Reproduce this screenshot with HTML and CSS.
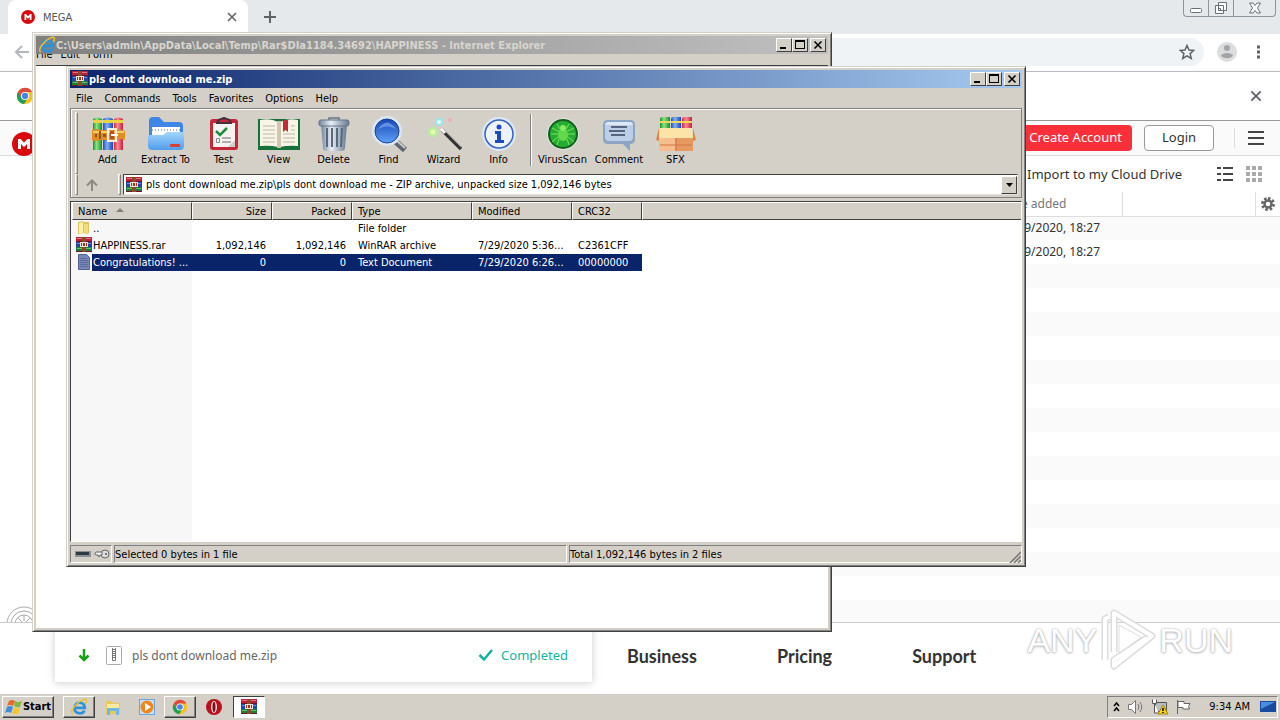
FILE: index.html
```html
<!DOCTYPE html>
<html lang="en">
<head>
    <meta charset="UTF-8">
    <meta name="viewport" content="width=device-width, initial-scale=1.0">
    <title>MEGA</title>
    <link rel="stylesheet" href="styles.css">
</head>
<body>
    <!-- shared icons -->
    <svg class="sprite" width="0" height="0" aria-hidden="true">
        <defs>
            <linearGradient id="gGreen"><stop offset="0" stop-color="#1c8f33"/><stop offset=".4" stop-color="#8fe67c"/><stop offset="1" stop-color="#1a8a30"/></linearGradient>
            <linearGradient id="gBlue"><stop offset="0" stop-color="#1e4fb8"/><stop offset=".4" stop-color="#7fb0f8"/><stop offset="1" stop-color="#1d47a6"/></linearGradient>
            <linearGradient id="gRed"><stop offset="0" stop-color="#d02a3c"/><stop offset=".4" stop-color="#fb8a94"/><stop offset="1" stop-color="#c81f3c"/></linearGradient>
            <linearGradient id="gFolder" x2="0" y2="1"><stop offset="0" stop-color="#a4d6fd"/><stop offset="1" stop-color="#4f9ded"/></linearGradient>
            <linearGradient id="gLens" x2="0" y2="1"><stop offset="0" stop-color="#1746b4"/><stop offset="1" stop-color="#5da2f8"/></linearGradient>
            <linearGradient id="gCan"><stop offset="0" stop-color="#74859a"/><stop offset=".4" stop-color="#e8eef5"/><stop offset="1" stop-color="#66788d"/></linearGradient>
        </defs>
        <symbol id="winrar" viewBox="0 0 16 16">
            <path fill="#b8203a" d="M0 0h16v5H0z"/>
            <path fill="#2446a8" d="M0 5h16v5H0z"/>
            <path fill="#1d7d3a" d="M0 10h16v5H0z"/>
            <path fill="#6d1530" d="M0 4h16v1H0zM0 14h16v1H0z"/>
            <path fill="#e2738a" d="M1 1h14v1H1z"/>
            <path fill="#6c8ce0" d="M1 6h14v1H1z"/>
            <path fill="#68bd72" d="M1 11h14v1H1z"/>
            <path fill="#8a4a25" d="M6 0h4v15H6z"/>
            <path fill="#efe4d0" d="M4 5h8v5H4z"/>
            <path fill="#a03418" d="M5 6h1v3H5zM7 6h2v3H7zM10 6h1v3h-1z"/>
        </symbol>
        <symbol id="chrome" viewBox="0 0 20 20">
            <circle cx="10" cy="10" r="9" fill="#fbc116"/>
            <path fill="#dd4b3e" d="M10 10V5.500h8A9 9 0 0 0 2.200 5.500L6 12z"/>
            <path fill="#1e9e58" d="M2.200 5.500A9 9 0 0 0 9 19l4-6.500-3-2.500-4 2z"/>
            <circle cx="10" cy="10" r="4.500" fill="#fff"/>
            <circle cx="10" cy="10" r="3.500" fill="#4484f2"/>
        </symbol>
        <symbol id="ie" viewBox="0 0 20 20">
            <path fill="none" stroke="#2a93dc" stroke-width="3" d="M5 11h11.500c0-8-11.500-7.500-11.500 0 0 7 9 7.500 11 3"/>
            <path fill="none" stroke="#eebf2c" stroke-width="1.600" d="M3 18c-4-3 4-13 11-16 5-2 5 1 3 5"/>
        </symbol>
        <symbol id="mega" viewBox="0 0 24 24">
            <circle cx="12" cy="12" r="12" fill="#d9090e"/>
            <path fill="#fff" d="M6 17V7h2.500L12 10.500 15.500 7H18v10h-3v-5l-3 3-3-3v5z"/>
        </symbol>
        <symbol id="cross" viewBox="0 0 12 12">
            <path fill="none" stroke="currentColor" stroke-width="1.600" d="M2 2l8 8M10 2l-8 8"/>
        </symbol>
    </svg>

    <div class="desktop">
        <!-- browser -->
        <div class="chrome">
            <div class="tab-strip">
                <div class="tab">
                    <svg width="14" height="14"><use href="#mega"/></svg>
                    <span class="tab-title">MEGA</span>
                    <button class="plain" aria-label="Close tab"><svg width="12" height="12"><use href="#cross"/></svg></button>
                </div>
                <button class="plain new-tab" aria-label="New tab">
                    <svg width="14" height="14" viewBox="0 0 14 14"><path stroke="#5f6368" stroke-width="2" d="M7 1v12M1 7h12"/></svg>
                </button>
                <div class="aero-controls">
                    <button aria-label="Minimize"><svg width="14" height="12" viewBox="0 0 14 12"><rect x="1.500" y="6.500" width="11" height="4" rx="1" fill="#fff" stroke="#6b7078"/></svg></button>
                    <button aria-label="Restore"><svg width="14" height="14" viewBox="0 0 14 14"><path fill="#fff" stroke="#6b7078" d="M4.500 1.500h8v8h-8zM1.500 4.500h8v8h-8z"/><path fill="none" stroke="#6b7078" d="M4.500 7.500h2v2h-2z"/></svg></button>
                    <button class="aero-close" aria-label="Close"><svg width="12" height="12" viewBox="0 0 12 12"><path fill="#fff" stroke="#6b7078" d="M.5 1h3.500L6 3.500 8 1h3.500L8.500 6l3 5H8L6 8.500 4 11H.5l3-5z"/></svg></button>
                </div>
            </div>
            <div class="nav-bar">
                <button class="plain" aria-label="Back"><svg width="16" height="16" viewBox="0 0 16 16"><path fill="none" stroke="#b4b6b9" stroke-width="2" d="M15 8H2M8 2L2 8l6 6"/></svg></button>
                <div class="omnibox">
                    <button class="plain" aria-label="Bookmark this page"><svg width="16" height="16" viewBox="0 0 16 16"><path fill="none" stroke="#5f6368" stroke-width="1.500" d="M8 1.500l2 4.500 4.800.4-3.700 3.200 1.200 4.900L8 11.900l-4.300 2.600 1.200-4.900L1.200 6.400 6 6z"/></svg></button>
                </div>
                <button class="plain" aria-label="Profile"><svg width="20" height="20" viewBox="0 0 20 20"><circle cx="10" cy="10" r="10" fill="#dcdddf"/><circle cx="10" cy="6" r="3" fill="#a2a4a7"/><path fill="#a2a4a7" d="M4 13.500c1-3.500 11-3.500 12 0-2 3.500-10 3.500-12 0z"/></svg></button>
                <button class="plain" aria-label="Menu"><svg width="16" height="16" viewBox="0 0 16 16"><path fill="#5f6368" d="M7 1.500h3v3H7zM7 6.500h3v3H7zM7 11.500h3v3H7z"/></svg></button>
            </div>
            <div class="infobar">
                <svg width="18" height="18"><use href="#chrome"/></svg>
                <button class="plain" aria-label="Dismiss"><svg width="14" height="14"><use href="#cross"/></svg></button>
            </div>
            <div class="mega-header">
                <svg class="mega-logo" width="24" height="24"><use href="#mega"/></svg>
                <button class="btn-create">Create Account</button>
                <button class="btn-login">Login</button>
                <span class="divider"></span>
                <button class="plain" aria-label="Main menu"><svg width="18" height="16" viewBox="0 0 18 16"><path stroke="#444" stroke-width="2" d="M1 2h16M1 8h16M1 14h16"/></svg></button>
            </div>
            <div class="mega-tools">
                <a href="#">Import to my Cloud Drive</a>
                <button class="plain" aria-label="List view"><svg width="18" height="16" viewBox="0 0 18 16"><path stroke="#444" stroke-width="2" d="M1 2h4M7 2h10M1 8h4M7 8h10M1 14h4M7 14h10"/></svg></button>
                <button class="plain" aria-label="Grid view"><svg width="16" height="16" viewBox="0 0 16 16"><path fill="#aaa" d="M0 0h4v4H0zM6 0h4v4H6zM12 0h4v4h-4zM0 6h4v4H0zM6 6h4v4H6zM12 6h4v4h-4zM0 12h4v4H0zM6 12h4v4H6zM12 12h4v4h-4z"/></svg></button>
            </div>
            <div class="mega-files">
                <table class="mega-table">
                    <thead>
                        <tr><th></th><th class="date">Date added</th><th class="rest"></th><th class="gear"><svg width="14" height="14" viewBox="0 0 14 14"><path fill="none" stroke="#666" stroke-width="3" stroke-dasharray="2.500 1.820" d="M7 1.500a5.500 5.500 0 1 1-.01 0"/><circle cx="7" cy="7" r="3.500" fill="none" stroke="#666" stroke-width="2.500"/></svg></th></tr>
                    </thead>
                    <tbody>
                        <tr><td></td><td class="date">07/29/2020, 18:27</td><td colspan="2"></td></tr>
                        <tr><td></td><td class="date">07/29/2020, 18:27</td><td colspan="2"></td></tr>
                    </tbody>
                </table>
                <svg class="dial" width="36" height="16" viewBox="0 0 36 16"><g fill="none" stroke="#aaa"><circle cx="18" cy="18" r="17"/><circle cx="18" cy="18" r="13"/><circle cx="18" cy="18" r="9"/><path d="M12 12l4 4M18 9v6M24 12l-4 4"/></g></svg>
            </div>
            <div class="mega-footer">
                <div class="transfer">
                    <svg width="12" height="14" viewBox="0 0 12 14"><path fill="none" stroke="#12a312" stroke-width="2.500" d="M6 1v11M1.500 7.500L6 12l4.500-4.500"/></svg>
                    <svg class="zip" width="16" height="19" viewBox="0 0 16 19"><rect x=".5" y=".5" width="15" height="18" rx="1" fill="#fff" stroke="#aaa"/><path fill="none" stroke="#777" d="M6.500 2v12.500h3V2M7 3.500h2M7 5.500h2M7 7.500h2M7 9.500h2M7 11.500h2"/></svg>
                    <span class="transfer-name">pls dont download me.zip</span>
                    <svg width="16" height="14" viewBox="0 0 16 14"><path fill="none" stroke="#10b5a0" stroke-width="2.500" d="M1.500 7l4.500 4.500L14 2"/></svg>
                    <span class="transfer-state">Completed</span>
                </div>
                <nav class="footer-links">
                    <a href="#">Business</a>
                    <a href="#">Pricing</a>
                    <a href="#">Support</a>
                </nav>
            </div>
        </div>

        <!-- Internet Explorer window -->
        <div class="window ie-window">
            <div class="title-bar inactive">
                <svg width="18" height="18"><use href="#ie"/></svg>
                <span class="caption">C:\Users\admin\AppData\Local\Temp\Rar$DIa1184.34692\HAPPINESS - Internet Explorer</span>
                <div class="controls">
                    <button aria-label="Minimize"><svg width="10" height="10"><path fill="#000" d="M1 7h6v2H1z"/></svg></button>
                    <button aria-label="Maximize"><svg width="10" height="10"><path fill="#000" fill-rule="evenodd" d="M0 0h10v9H0zM1 2v6h8V2z"/></svg></button>
                    <button class="close" aria-label="Close"><svg width="10" height="10"><path fill="none" stroke="#000" stroke-width="1.600" d="M1.500 1.500l7 7M8.500 1.500l-7 7"/></svg></button>
                </div>
            </div>
            <div class="ie-menu"><span>File</span><span>Edit</span><span>Form</span></div>
            <div class="ie-page"></div>
        </div>

        <!-- WinRAR window -->
        <div class="window rar-window">
            <div class="title-bar">
                <svg width="16" height="16"><use href="#winrar"/></svg>
                <span class="caption">pls dont download me.zip</span>
                <div class="controls">
                    <button aria-label="Minimize"><svg width="10" height="10"><path fill="#000" d="M1 7h6v2H1z"/></svg></button>
                    <button aria-label="Maximize"><svg width="10" height="10"><path fill="#000" fill-rule="evenodd" d="M0 0h10v9H0zM1 2v6h8V2z"/></svg></button>
                    <button class="close" aria-label="Close"><svg width="10" height="10"><path fill="none" stroke="#000" stroke-width="1.600" d="M1.500 1.500l7 7M8.500 1.500l-7 7"/></svg></button>
                </div>
            </div>
            <div class="menu-bar">
                <button>File</button><button>Commands</button><button>Tools</button><button>Favorites</button><button>Options</button><button>Help</button>
            </div>
            <div class="rebar">
                <div class="toolbar">
                    <span class="grip"></span>
                    <button class="tool">
                        <svg width="36" height="36" viewBox="0 0 36 36">
                            <path fill="url(#gGreen)" d="M3 3q4-3 9 0v31H3z"/><path fill="url(#gBlue)" d="M13 3q5-3 10 0v31H13z"/><path fill="url(#gRed)" d="M24 3q5-3 9 0v31h-9z"/>
                            <path fill="#e8d442" d="M3 4h9v3H3zM13 4h10v3H13zM24 4h9v3h-9z"/>
                            <path fill="#dd8e24" d="M2 14q4-2 8 0h16q4-2 9 1v9q-5-2-9 0H10q-4 2-8 0z"/><path fill="#f8cd63" d="M3 15h31v2H3z"/>
                            <path fill="#9c5212" d="M5 18h2v3H5zM9 15h2v8H9zM13 18h3v3h-3z"/>
                            <path fill="none" stroke="#f7f1e4" stroke-width="2" d="M18 13h8v12h-8z"/><path fill="#b84f20" d="M20 15h4v8h-4z"/><path fill="#fff" d="M21 18h7v2h-7z"/>
                        </svg>
                        Add
                    </button>
                    <button class="tool wide">
                        <svg width="36" height="36" viewBox="0 0 36 36">
                            <path fill="#3f86e6" d="M1 5q0-4 4-4h6l5 5h15q4 0 4 4v12H1z"/><path fill="#fff" d="M4 11h28v10H4z"/>
                            <path fill="none" stroke="#a7b4c4" stroke-width="2" stroke-dasharray="1 2" d="M4 14h28"/>
                            <path fill="url(#gFolder)" d="M0 19h15l4-3h17v14q0 4-4 4H4q-4 0-4-4z"/>
                            <rect x="22" y="28" width="10" height="3" rx="1" fill="#d64232"/>
                        </svg>
                        Extract To
                    </button>
                    <button class="tool">
                        <svg width="36" height="36" viewBox="0 0 36 36">
                            <rect x="4" y="3" width="28" height="31" rx="3" fill="#c4263a"/><path fill="#f4f3f0" d="M7 7h22v24H7z"/>
                            <path fill="#cfcfcd" d="M22 31l7-7v7z"/><path fill="none" stroke="#443038" stroke-width="2" d="M11 7q1-4 5-4 2-2 4 0 4 0 5 4z"/>
                            <path fill="none" stroke="#218b40" stroke-width="2.500" d="M10 15l4 4 7-7"/><path stroke="#999" stroke-width="1.500" d="M16 22h9M16 26h9"/><path fill="none" stroke="#888" d="M10.500 22.500h3v4h-3z"/>
                        </svg>
                        Test
                    </button>
                    <button class="tool">
                        <svg width="42" height="36" viewBox="0 0 42 36">
                            <path fill="#18703a" d="M0 3h42v31H0z"/><path fill="#f8f5e7" d="M2 4q11-2 18 2v25q-8-2-18-1zM40 4q-11-2-18 2v25q8-2 18-1z"/>
                            <path fill="#cfc8ae" d="M19 5h4v27h-4z"/><path stroke="#bab7a9" d="M5 10h12M5 14h12M5 18h12M5 22h12M5 26h12M25 18h12M25 22h12M25 26h12M33 10h4M33 14h4"/>
                            <path fill="#c22b34" d="M25 4h5v12l-2.500-2-2.500 2z"/>
                        </svg>
                        View
                    </button>
                    <button class="tool">
                        <svg width="36" height="36" viewBox="0 0 36 36">
                            <path fill="url(#gCan)" d="M5 8h26l-2 24q0 3-4 3H11q-4 0-4-3z"/><path stroke="#59697c" stroke-width="2" d="M11 12v19M16 12v19M21 12v19M26 12l-1 19"/>
                            <rect x="3" y="4" width="30" height="6" rx="2" fill="url(#gCan)" stroke="#65758a"/><path fill="none" stroke="#65758a" stroke-width="1.500" d="M13 4V2h10v2"/>
                        </svg>
                        Delete
                    </button>
                    <button class="tool">
                        <svg width="36" height="36" viewBox="0 0 36 36">
                            <path stroke="#60666f" stroke-width="6" d="M24 25l10 9"/><path stroke="#c8cdd4" stroke-width="2" d="M25 24l9 8"/>
                            <circle cx="16" cy="15" r="15" fill="#dce6f0"/><circle cx="16" cy="15" r="12" fill="url(#gLens)" stroke="#173f96"/>
                            <path fill="#85b4f7" opacity=".6" d="M7 13q9-13 18 0-9-5-18 0z"/>
                        </svg>
                        Find
                    </button>
                    <button class="tool">
                        <svg width="36" height="36" viewBox="0 0 36 36">
                            <path stroke="#333" stroke-width="3.500" d="M16 14l19 19"/><path stroke="#999" d="M17 13l18 18"/><path stroke="#f5f5f5" stroke-width="3" d="M15 13l4 4"/>
                            <circle cx="7" cy="16" r="5" fill="#b8ee9a"/><circle cx="7" cy="16" r="2.500" fill="#e5fcb0"/>
                            <circle cx="13" cy="6" r="4" fill="#9de5ec"/><circle cx="13" cy="6" r="2" fill="#e3ffff"/><circle cx="24" cy="4" r="2" fill="#efb1b9"/>
                        </svg>
                        Wizard
                    </button>
                    <button class="tool">
                        <svg width="36" height="36" viewBox="0 0 36 36">
                            <circle cx="18" cy="18" r="17" fill="#dce7f7"/><circle cx="18" cy="18" r="14" fill="#edf2fb" stroke="#3661c2" stroke-width="1.500"/>
                            <circle cx="18" cy="11" r="2.500" fill="#1c4bc2"/><path fill="#1c4bc2" d="M14 15h6v9h3v3h-9v-3h2v-6h-2z"/>
                        </svg>
                        Info
                    </button>
                    <span class="tool-sep"></span>
                    <button class="tool">
                        <svg width="36" height="36" viewBox="0 0 36 36">
                            <circle cx="18" cy="18" r="16" fill="#dfe8dc"/><circle cx="18" cy="18" r="15" fill="#155d20"/><circle cx="18" cy="18" r="13" fill="#24ad32"/>
                            <path fill="none" stroke="#7de45c" d="M7 12l6 3h10l6-3M6 18h24M7 26l6-5h10l6 5M12 8l3 5M24 8l-3 5M12 29l2-6M24 29l-2-6"/>
                            <ellipse cx="18" cy="19" rx="5" ry="6" fill="#63d94a"/><circle cx="18" cy="12" r="3" fill="#88ec63"/>
                        </svg>
                        VirusScan
                    </button>
                    <button class="tool comment">
                        <svg width="36" height="36" viewBox="0 0 36 36">
                            <path fill="#8da5c5" d="M7 4h22q5 0 5 5v14q0 5-5 5v7l-7-7H7q-5 0-5-5V9q0-5 5-5z"/><path fill="#bdcfe6" d="M8 6h20q4 0 4 4v11q0 4-4 4H8q-4 0-4-4V10q0-4 4-4z"/>
                            <path fill="#dce8f5" d="M8 6h20q4 0 4 3H4q0-3 4-3z"/><path stroke="#34415c" stroke-width="1.500" d="M10 11h16M8 15h16M10 19h14"/>
                        </svg>
                        Comment
                    </button>
                    <button class="tool">
                        <svg width="40" height="36" viewBox="0 0 40 36">
                            <path fill="url(#gGreen)" d="M4 3q0-2 3-2h7v14H4z"/><path fill="url(#gBlue)" d="M15 3q0-2 3-2h7v14H15z"/><path fill="url(#gRed)" d="M26 3q0-2 3-2h7v14H26z"/>
                            <path fill="#f0dc54" d="M4 5h10v2H4zM15 5h10v2H15zM26 5h10v2H26z"/>
                            <path fill="#e79961" d="M3 20h34v15H3z"/><path fill="#f7bd8c" d="M3 21h16v14H3z"/>
                            <path fill="#fce4a8" d="M4 12h32l1 10H3z"/>
                            <path fill="#d9854d" d="M3 12L0 24l3 1zM37 12l3 12-3 1z"/><path stroke="#cd7945" d="M20 22v13M4 29h32"/>
                        </svg>
                        SFX
                    </button>
                </div>
                <div class="address-row">
                    <span class="grip"></span>
                    <button class="plain up" aria-label="Up one level"><svg width="12" height="12" viewBox="0 0 12 12"><path fill="none" stroke="#8b8985" stroke-width="2" d="M6 12V2M1 6.500L6 1.500l5 5"/></svg></button>
                    <span class="grip"></span>
                    <div class="combo">
                        <svg width="16" height="16"><use href="#winrar"/></svg>
                        <input type="text" aria-label="Archive path" value="pls dont download me.zip\pls dont download me - ZIP archive, unpacked size 1,092,146 bytes">
                        <button class="drop" aria-label="Show list"><svg width="7" height="4"><path fill="#000" d="M0 0h7L3.500 4z"/></svg></button>
                    </div>
                </div>
            </div>
            <div class="file-list">
                <table class="files">
                    <thead>
                        <tr>
                            <th class="c-name">Name <svg width="8" height="4"><path fill="#85827c" d="M4 0l4 4H0z"/></svg></th>
                            <th class="c-size num">Size</th>
                            <th class="c-size num">Packed</th>
                            <th class="c-type">Type</th>
                            <th class="c-mod">Modified</th>
                            <th class="c-crc">CRC32</th>
                            <th class="c-rest"></th>
                        </tr>
                    </thead>
                    <tbody>
                        <tr>
                            <td class="name"><div><svg width="16" height="16" viewBox="0 0 16 16"><path fill="#e2c35b" d="M2 2l5-1v1h6v11H7l-5 1z"/><path fill="#fbeeaa" d="M3 3l4-1v12l-4-1z"/><path fill="#f1dc82" d="M8 4h4v10H8z"/></svg><span>..</span></div></td>
                            <td></td><td></td><td>File folder</td><td></td><td></td><td></td>
                        </tr>
                        <tr>
                            <td class="name"><div><svg width="16" height="16"><use href="#winrar"/></svg><span>HAPPINESS.rar</span></div></td>
                            <td class="num">1,092,146</td><td class="num">1,092,146</td><td>WinRAR archive</td><td>7/29/2020 5:36...</td><td>C2361CFF</td><td></td>
                        </tr>
                        <tr class="selected">
                            <td class="name"><div><svg width="16" height="16" viewBox="0 0 16 16"><path fill="#7788b8" stroke="#526397" d="M2.500.5h8l3 3v12h-11z"/><path stroke="#5a6b9e" d="M4 4.500h7M4 6.500h8M4 8.500h8M4 10.500h8M4 12.500h8"/></svg><span>Congratulations! ...</span></div></td>
                            <td class="num">0</td><td class="num">0</td><td>Text Document</td><td>7/29/2020 6:26...</td><td>00000000</td><td></td>
                        </tr>
                    </tbody>
                </table>
            </div>
            <div class="status-bar">
                <div class="pane pane-icons">
                    <svg width="16" height="8" viewBox="0 0 16 8"><path fill="#8b9096" d="M0 1h16v6H0z"/><path fill="#2f3b44" d="M1 2h13v3H1z"/></svg>
                    <svg width="16" height="11" viewBox="0 0 16 11"><circle cx="11" cy="5" r="4" fill="#ddd" stroke="#666"/><path fill="#eee" stroke="#666" d="M8 3H2L.5 5 2 6h2l1 2 1-2h2z"/><circle cx="12" cy="5" r="1" fill="#555"/></svg>
                </div>
                <div class="pane">Selected 0 bytes in 1 file</div>
                <div class="pane">Total 1,092,146 bytes in 2 files
                    <svg class="size-grip" width="12" height="12" viewBox="0 0 12 12"><path stroke="#77746e" stroke-width="1.500" d="M1 12L12 1M5 12l7-7M9 12l3-3"/></svg>
                </div>
            </div>
        </div>

        <div class="watermark" aria-hidden="true">
            <span>ANY</span>
            <svg width="58" height="64" viewBox="0 0 58 64"><g fill="none" stroke-linejoin="round"><path stroke="#dcdcdc" stroke-width="7" d="M6 52V11l4-2M15 44V5l38 23L15 58v-6l33-22"/><path stroke="#fff" stroke-width="4" d="M6 52V11l4-2M15 44V5l38 23L15 58v-6l33-22"/><path stroke="#ddd" d="M20 17v29l22-17z"/></g></svg>
            <span>RUN</span>
        </div>
    </div>

    <div class="taskbar">
        <button class="start"><svg width="18" height="18" viewBox="0 0 18 18"><path fill="#e46a2c" d="M4 3q3-2 6 0L8 8Q5 6 2 8z"/><path fill="#7cb842" d="M10 3q3 2 7 0l-2 6q-3 1-6-1z"/><path fill="#3f8ede" d="M2 9q3-2 6 0l-2 6q-3-2-6 0z"/><path fill="#f6c431" d="M9 9q3 2 6 1l-2 6q-3 1-6-1z"/></svg>Start</button>
        <button class="task raised" aria-label="Internet Explorer"><svg width="18" height="18"><use href="#ie"/></svg></button>
        <button class="task" aria-label="Explorer"><svg width="18" height="18" viewBox="0 0 18 18"><path fill="#e9c95d" d="M2 3h6l1 2h7v11H2z"/><path fill="#fbeaa3" d="M3 6h12v5H3z"/><path fill="#73b6df" d="M3 10h12v7h-3v-4H6v4H3z"/></svg></button>
        <button class="task" aria-label="Media Player"><svg width="18" height="18" viewBox="0 0 18 18"><path fill="#6ba6dd" d="M1 1h16v16H1z"/><path fill="#c7e0f5" d="M2 2h14v14H2z"/><circle cx="9" cy="9" r="6.500" fill="#f0861c"/><path fill="#fff" d="M7 5l6 4-6 4z"/></svg></button>
        <button class="task raised" aria-label="Chrome"><svg width="16" height="16"><use href="#chrome"/></svg></button>
        <button class="task" aria-label="Opera"><svg width="18" height="18" viewBox="0 0 18 18"><circle cx="9" cy="9" r="8" fill="#b7121b"/><ellipse cx="9" cy="9" rx="3" ry="6" fill="#f8dede"/><ellipse cx="9" cy="9" rx="1.500" ry="5" fill="#7e0a11"/></svg></button>
        <button class="task pressed" aria-label="WinRAR"><svg width="16" height="16"><use href="#winrar"/></svg></button>
        <div class="tray">
            <svg width="9" height="12" viewBox="0 0 9 12"><path fill="none" stroke="#000" stroke-width="1.500" d="M2 5l2.500-3L7 5M2 10l2.500-3L7 10"/></svg>
            <svg width="18" height="16" viewBox="0 0 18 16"><path fill="#fff" stroke="#777" d="M1.500 5.500h3l4-4v13l-4-4h-3z"/><path fill="none" stroke="#777" d="M11 5q2 3 0 6M13 3q3.500 5 0 10"/></svg>
            <svg width="18" height="16" viewBox="0 0 18 16"><path fill="#b9bec4" stroke="#555" d="M4.500 3.500h11v9h-11z"/><path fill="#fff" stroke="#555" d="M1.500.5v4h4v-4M3.500 4v10h4"/><path fill="#f7d51d" stroke="#a88800" d="M12 6l5 9H7z"/><path stroke="#000" stroke-width="1.500" d="M12 9v3M12 13v1"/></svg>
            <svg width="18" height="16" viewBox="0 0 18 16"><path fill="#fff" stroke="#666" d="M2.500 1v14M3 2.500h6v2h6l-1.500 3 1 2.500H8v-1.500H3z"/></svg>
            <span class="clock">9:34 AM</span>
            <svg width="16" height="14" viewBox="0 0 16 14"><path fill="#194b9f" d="M0 1h16v11H0z"/><path fill="#4d8de0" d="M1 2h14L1 9z"/><path fill="#cfd7df" d="M4 12h8v1H4z"/></svg>
        </div>
    </div>
</body>
</html>
```
FILE: styles.css
```css
* {
    box-sizing: border-box;
}
body {
    margin: 0;
    height: 100vh;
    display: flex;
    flex-direction: column;
    overflow: hidden;
    font-family: "DejaVu Sans Condensed", Tahoma, sans-serif;
    font-size: 11px;
    color: #000;
}
button, input {
    font: inherit;
    color: inherit;
    padding: 0;
}
svg {
    display: block;
    flex: none;
}
.sprite {
    position: absolute;
}
.plain {
    border: none;
    background: none;
    display: flex;
    align-items: center;
    justify-content: center;
    color: #5f6368;
}
.desktop {
    position: relative;
    flex: 1;
    min-height: 0;
    overflow: hidden;
}

/* browser */
.chrome {
    height: 100%;
    display: flex;
    flex-direction: column;
    background: #fff;
    font-family: "Noto Sans", sans-serif;
    font-size: 13px;
    color: #333;
}
.tab-strip {
    display: flex;
    height: 34px;
    padding: 0 4px 0 8px;
    background: #e5e9ec;
}
.tab {
    display: flex;
    align-items: center;
    gap: 8px;
    width: 240px;
    padding: 0 10px 0 13px;
    background: #fff;
    border-radius: 8px 8px 0 0;
}
.tab-title {
    flex: 1;
    font-family: "DejaVu Sans Condensed", sans-serif;
    font-size: 11px;
    color: #555;
}
.new-tab {
    width: 44px;
}
.aero-controls {
    display: flex;
    height: 17px;
    margin-left: auto;
    border: 1px solid #8d949c;
    border-top: none;
    border-radius: 0 0 4px 4px;
}
.aero-controls button {
    display: flex;
    align-items: center;
    justify-content: center;
    width: 25px;
    border: none;
    border-right: 1px solid #8d949c;
    background: none;
}
.aero-controls .aero-close {
    width: 41px;
    border-right: none;
}
.nav-bar {
    display: flex;
    align-items: center;
    gap: 13px;
    height: 38px;
    padding: 0 14px 2px;
    border-bottom: 1px solid #b9bbbd;
}
.omnibox {
    flex: 1;
    display: flex;
    justify-content: flex-end;
    align-items: center;
    height: 28px;
    padding: 0 9px;
    background: #f0f3f5;
    border-radius: 14px;
}
.infobar {
    display: flex;
    align-items: center;
    justify-content: space-between;
    height: 49px;
    padding: 0 17px 0 16px;
    border-bottom: 1px solid #999;
    box-shadow: 0 1px 3px #bbb;
}
.mega-header {
    display: flex;
    align-items: center;
    gap: 12px;
    height: 35px;
    padding: 0 15px 0 12px;
    background: #fafafa;
    border-bottom: 1px solid #ddd;
}
.mega-logo {
    margin-top: 12px;
}
.btn-create, .btn-login {
    height: 26px;
    border-radius: 4px;
    font-size: 13px;
}
.btn-create {
    margin-left: auto;
    padding: 0 10px 2px;
    border: none;
    background: #f9303a;
    color: #fff;
}
.btn-login {
    width: 70px;
    padding-bottom: 2px;
    border: 1px solid #999;
    background: #fff;
}
.divider {
    width: 5px;
    height: 20px;
    margin-left: 4px;
    border-right: 1px solid #ddd;
}
.mega-tools {
    display: flex;
    align-items: center;
    justify-content: flex-end;
    gap: 12px;
    height: 36px;
    padding: 0 18px;
}
.mega-tools a {
    margin-right: 22px;
    color: #333;
    text-decoration: none;
}
.mega-files {
    position: relative;
    flex: 1;
    min-height: 0;
    overflow: hidden;
    padding-left: 48px;
    background: repeating-linear-gradient(#fafafa 0 24px, #fff 24px 48px) 48px 24px no-repeat;
}
.mega-table {
    width: 100%;
    table-layout: fixed;
    border-collapse: collapse;
    font-size: 12px;
    line-height: 16px;
}
.mega-table th, .mega-table td {
    height: 24px;
    padding: 0;
    font-weight: normal;
    text-align: right;
}
.mega-table th {
    border-bottom: 1px solid #ddd;
    border-right: 1px solid #ddd;
    color: #777;
}
.mega-table .date {
    width: 180px;
    padding-right: 22px;
}
.mega-table th.date {
    padding-right: 55px;
}
.mega-table .rest {
    width: 133px;
}
.mega-table .gear {
    width: 25px;
    padding-left: 5px;
    border-right: none;
}
.dial {
    position: absolute;
    left: 6px;
    bottom: 0;
}
.mega-footer {
    display: flex;
    height: 71px;
    padding-left: 55px;
    border-top: 1px solid #ccc;
}
.transfer {
    display: flex;
    align-items: center;
    width: 537px;
    height: 59px;
    padding: 5px 24px 0 23px;
    background: #fff;
    box-shadow: 0 1px 8px #ccc;
}
.transfer .zip {
    margin: 0 10px 0 16px;
}
.transfer-name {
    flex: 1;
    font-size: 12px;
    color: #666;
}
.transfer-state {
    margin-left: 7px;
    color: #10b5a0;
}
.footer-links {
    display: flex;
    gap: 80px;
    padding: 20px 0 0 35px;
    font: bold 18px/26px Lato, sans-serif;
}
.footer-links a {
    color: #333;
    text-decoration: none;
}

/* classic windows */
.window {
    position: absolute;
    display: flex;
    flex-direction: column;
    padding: 3px;
    background: #d4d0c8;
    border: 1px solid;
    border-color: #d4d0c8 #404040 #404040 #d4d0c8;
    box-shadow: inset 1px 1px #fff, inset -1px -1px #808080;
}
.ie-window {
    left: 32px;
    top: 32px;
    width: 800px;
    height: 600px;
}
.rar-window {
    left: 66px;
    top: 66px;
    width: 960px;
    height: 501px;
}
.title-bar {
    display: flex;
    align-items: center;
    height: 18px;
    padding: 0 2px;
    background: linear-gradient(to right, #0a246a, #a6caf0);
    color: #fff;
    font-weight: bold;
}
.title-bar.inactive {
    background: linear-gradient(to right, #808080, #c0c0c0);
    color: #d8d5ce;
}
.caption {
    flex: 1;
    padding-left: 1px;
    white-space: nowrap;
}
.inactive .caption {
    padding-left: 0;
}
.controls {
    display: flex;
}
.controls button, .drop {
    display: flex;
    align-items: center;
    justify-content: center;
    width: 16px;
    height: 14px;
    background: #d4d0c8;
    border: 1px solid;
    border-color: #fff #404040 #404040 #fff;
}
.controls .close {
    margin-left: 2px;
}
.ie-menu {
    display: flex;
    align-items: flex-end;
    gap: 8px;
    height: 12px;
    padding-bottom: 4px;
    overflow: hidden;
    border-bottom: 1px solid #404040;
    line-height: 12px;
}
.ie-page {
    flex: 1;
    background: #fff;
}
.menu-bar {
    display: flex;
    height: 20px;
}
.menu-bar button {
    padding: 0 6px;
    border: none;
    background: none;
}
.rebar {
    padding: 3px 3px 2px;
    border: 1px solid #808080;
    box-shadow: inset 1px 1px #fff;
}
.toolbar {
    display: flex;
    height: 62px;
    padding-left: 1px;
}
.grip {
    width: 3px;
    border: 1px solid;
    border-color: #fff #808080 #808080 #fff;
}
.tool {
    display: flex;
    flex-direction: column;
    align-items: center;
    gap: 1px;
    width: 55px;
    padding-top: 4px;
    border: none;
    background: none;
    line-height: 14px;
}
.grip + .tool {
    margin-left: 2px;
}
.tool.wide {
    width: 61px;
}
.tool.comment {
    width: 58px;
}
.tool-sep {
    width: 2px;
    height: 52px;
    margin: 2px 3px 2px 4px;
    border-left: 1px solid #808080;
    border-right: 1px solid #fff;
}
.address-row {
    display: flex;
    align-items: stretch;
    height: 21px;
    padding-left: 1px;
}
.up {
    width: 28px;
    margin-right: 12px;
}
.combo {
    flex: 1;
    display: flex;
    align-items: center;
    margin-left: 2px;
    padding-left: 2px;
    background: #fff;
    border: 1px solid #404040;
    border-color: #404040 #e4e1da #e4e1da #404040;
}
.combo input {
    flex: 1;
    min-width: 0;
    padding-left: 4px;
    border: none;
    background: none;
    outline: none;
}
.drop {
    height: 18px;
}
.file-list {
    flex: 1;
    min-height: 0;
    margin-top: 3px;
    padding-left: 1px;
    border: 1px solid;
    border-color: #404040 #fff #fff #404040;
    background: linear-gradient(to right, #f7f7f7 121px, #fff 121px);
}
.files {
    width: 100%;
    table-layout: fixed;
    border-collapse: separate;
    border-spacing: 0;
    line-height: 15px;
}
.files th {
    height: 18px;
    padding: 0 5px;
    background: #d4d0c8;
    border: 1px solid;
    border-color: #fff #404040 #404040 #fff;
    font-weight: normal;
    text-align: left;
}
.files .c-rest {
    border-right: none;
}
.files th svg {
    display: inline-block;
    margin: 0 0 3px 6px;
}
.files td {
    height: 17px;
    padding: 0 6px;
    white-space: nowrap;
    overflow: hidden;
}
.files .num {
    text-align: right;
}
.c-name, .c-type {
    width: 120px;
}
.c-size {
    width: 80px;
}
.c-mod {
    width: 100px;
}
.c-crc {
    width: 70px;
}
.files .name {
    padding: 0 0 0 4px;
}
.name div {
    display: flex;
}
.name span {
    flex: 1;
    padding-left: 1px;
    line-height: 17px;
}
.selected td, .selected .name span {
    background: #0a246a;
    color: #fff;
}
.selected td.name, .selected td:last-child {
    background: none;
}
.status-bar {
    display: flex;
    gap: 2px;
    height: 21px;
    padding-top: 3px;
}
.pane {
    display: flex;
    align-items: center;
    flex: 1;
    border: 1px solid;
    border-color: #808080 #fff #fff #808080;
}
.pane-icons {
    flex: none;
    gap: 3px;
    width: 42px;
    padding-left: 4px;
}
.size-grip {
    margin: 6px 0 0 auto;
}

.watermark {
    position: absolute;
    right: 47px;
    bottom: 21px;
    display: flex;
    align-items: center;
    gap: 2px;
    font: 34px/48px "Liberation Sans", sans-serif;
    color: #fff;
    text-shadow: 0 0 2px #aaa, 0 1px 3px #bbb;
}

/* taskbar */
.taskbar {
    display: flex;
    align-items: center;
    height: 27px;
    padding: 1px 2px 2px;
    background: #d4d0c8;
    border-top: 1px solid #fff;
}
.start, .task {
    display: flex;
    align-items: center;
    justify-content: center;
    height: 22px;
    border: 1px solid transparent;
    background: #d4d0c8;
}
.start, .raised {
    border-color: #fff #404040 #404040 #fff;
    box-shadow: inset -1px -1px #808080;
}
.start {
    width: 52px;
    margin-right: 9px;
    font-weight: bold;
}
.task {
    width: 34px;
}
.task.raised, .task.pressed {
    width: 32px;
}
.task.raised {
    margin-right: 1px;
}
.task.pressed {
    margin-left: 2px;
    background: #fff;
    border-color: #404040 #fff #fff #404040;
}
.tray {
    display: flex;
    align-items: center;
    gap: 6px;
    height: 22px;
    margin-left: auto;
    padding: 0 1px 0 4px;
    border: 1px solid;
    border-color: #808080 #fff #fff #808080;
}
.clock {
    padding: 0 4px 0 10px;
}
```
